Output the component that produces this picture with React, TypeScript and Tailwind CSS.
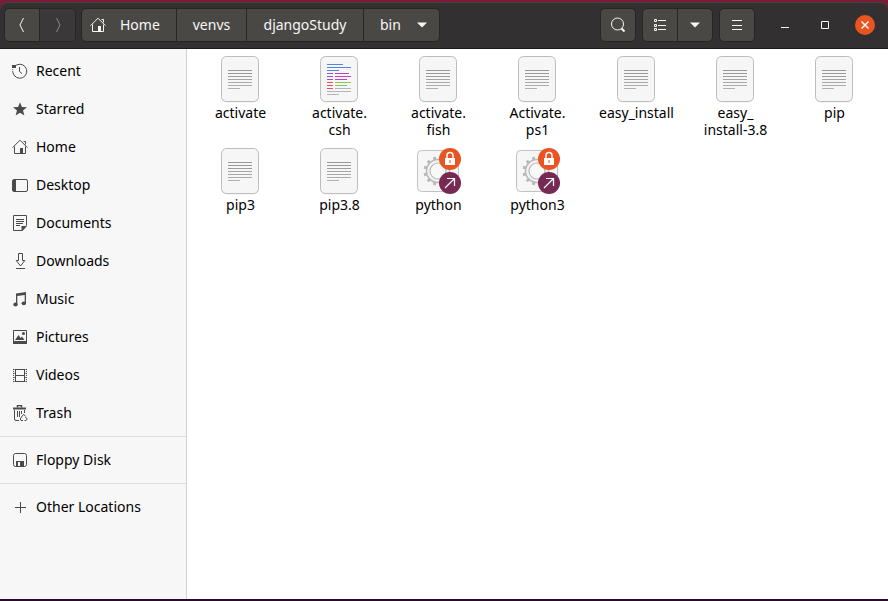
import type { ReactNode } from "react";

type IconProps = { children: ReactNode; className?: string };

function Icon({ children, className = "" }: IconProps) {
  return (
    <svg
      width="16"
      height="16"
      viewBox="0 0 16 16"
      fill="none"
      stroke="currentColor"
      aria-hidden="true"
      className={`shrink-0 ${className}`}
    >
      {children}
    </svg>
  );
}

const HomeGlyph = () => (
  <>
    <path d="M.6 8.6 8 1.2l7.4 7.4M11.5 2.5h2v3" />
    <path d="M2.5 7.5v7h6M13.5 7.5v7h-3" />
    <path d="M8 9h3v6H8z" fill="currentColor" stroke="none" />
  </>
);

const places: { name: string; glyph: ReactNode }[] = [
  {
    name: "Recent",
    glyph: (
      <>
        <path d="M2.2 4A7 7 0 1 1 .9 9.5" />
        <path d="M.9 9.5A7 7 0 0 1 .7 6" strokeDasharray="1.5 1" />
        <path d="M0 2h4v3H0z" fill="currentColor" stroke="none" />
        <path d="M7.5 4v4.5l2.5 2" />
      </>
    ),
  },
  {
    name: "Starred",
    glyph: (
      <path
        d="m8 1.2 1.9 4.8 5.100.2-4 3.300 1.400 5L8 11.700l-4.400 2.800 1.400-5L1 6.200 6.100 6z"
        fill="currentColor"
        stroke="none"
      />
    ),
  },
  { name: "Home", glyph: <HomeGlyph /> },
  {
    name: "Desktop",
    glyph: (
      <>
        <rect x=".5" y="2.500" width="15" height="12" rx="1.500" />
        <path d="M1 3h3v11H1z" fill="currentColor" stroke="none" />
      </>
    ),
  },
  {
    name: "Documents",
    glyph: (
      <>
        <path d="M1.500.5h13v10l-4 5h-9z" />
        <path d="M4 4.500h8M4 6.500h8M4 8.500h7M4 10.500h4" />
        <path d="M9.500 11H15l-5.500 5z" fill="currentColor" stroke="none" />
      </>
    ),
  },
  {
    name: "Downloads",
    glyph: (
      <>
        <path d="M6.500.5h4v7h2.300L8.500 13 4.200 7.500h2.300z" />
        <path d="M4 15.500h9" />
      </>
    ),
  },
  {
    name: "Music",
    glyph: (
      <g fill="currentColor" stroke="none">
        <path d="M4 2.500 14 1v11.500h-1.300V4L5.300 5v8.500H4z" />
        <ellipse cx="3.500" cy="13.500" rx="2.200" ry="1.900" />
        <ellipse cx="11.800" cy="12.300" rx="2.200" ry="1.900" />
      </g>
    ),
  },
  {
    name: "Pictures",
    glyph: (
      <>
        <path d="M1.500 1.500h13v13h-13z" />
        <path d="M1 12h14v3H1zM3 11l3.500-5 2.200 3 1.300-1.500L12.500 11z" fill="currentColor" stroke="none" />
        <circle cx="11.500" cy="4.500" r="1.500" fill="currentColor" stroke="none" />
      </>
    ),
  },
  {
    name: "Videos",
    glyph: (
      <>
        <path d="M3.500 2v13M12.500 2v13M3 2.500h10M3 8.500h10M3 14.500h10" />
        <path d="M1.500 2v13M14.500 2v13" strokeDasharray="1 1" />
        <path d="M1 2.500h2M1 14.500h2M13 2.500h2M13 14.500h2M1 6.500h2M1 10.500h2M13 6.500h2M13 10.500h2" opacity=".6" />
      </>
    ),
  },
  {
    name: "Trash",
    glyph: (
      <>
        <path d="M1 3.500h13" strokeWidth="2" />
        <path d="M5.500 2.500v-2h4v2" strokeWidth="1.500" />
        <path d="M2.500 5v9q0 1.500 1.500 1.500h3M12.500 5v3M5.500 6v6M7.500 6v6M9.500 6v3" />
        <path d="m9.500 12 2.200-2.700 2 2.200M13.500 12l1.700 2-1.200 1.500h-1.500M11 15.500H9L8.300 14l1.200-2" />
      </>
    ),
  },
];

const devices: { name: string; glyph: ReactNode }[] = [
  {
    name: "Floppy Disk",
    glyph: (
      <>
        <rect x="1.500" y="1.500" width="13" height="13" rx="2" />
        <path d="M4 9h8v5H8v-4H6v4H4z" fill="currentColor" stroke="none" />
      </>
    ),
  },
];

const others: { name: string; glyph: ReactNode }[] = [
  { name: "Other Locations", glyph: <path d="M3 8.500h11M8.500 3v11" /> },
];

function PlaceList({ items }: { items: { name: string; glyph: ReactNode }[] }) {
  return (
    <ul>
      {items.map((item) => (
        <li key={item.name}>
          <a href="#" className="flex h-[38px] items-center gap-2 pl-3 text-black">
            <Icon className="text-[#4a4a4a]">{item.glyph}</Icon>
            {item.name}
          </a>
        </li>
      ))}
    </ul>
  );
}

type Kind = "text" | "script" | "program";

const GRAY = "#b5b5b5";
const BLUE = "#5584e8";
const VIOLET = "#8a55d0";
const PINK = "#c33fc0";
const RED = "#e8505c";
const GREEN = "#86c65a";

const scriptLines: [number, number, number, string][] = [
  [11, 9, 16, BLUE],
  [11, 12, 24, BLUE],
  [11, 15, 12, BLUE],
  [11, 18, 6, VIOLET],
  [19, 18, 14, PINK],
  [11, 21, 6, VIOLET],
  [19, 21, 16, PINK],
  [11, 24, 6, VIOLET],
  [19, 24, 12, PINK],
  [11, 27, 6, RED],
  [19, 27, 16, GREEN],
  [11, 30, 6, RED],
  [19, 30, 12, GREEN],
  [11, 33, 6, RED],
  [19, 33, 16, GRAY],
  [11, 36, 24, GRAY],
  [11, 39, 12, GRAY],
];

const textLines: [number, number, number, string][] = [
  [11, 15, 24, "#989898"],
  [11, 18, 24, "#989898"],
  [11, 21, 24, "#9c9c9c"],
  [11, 24, 24, "#a4a4a4"],
  [11, 27, 24, "#a8a8a8"],
  [11, 30, 24, "#acacac"],
  [11, 33, 12, "#b0b0b0"],
];

const teeth = [0, 30, 60, 90, 120, 150, 180, 210, 240, 270, 300, 330];

function FileIcon({ kind }: { kind: Kind }) {
  if (kind === "program") {
    return (
      <svg width="47" height="48" viewBox="0 0 47 48" fill="none" aria-hidden="true">
        <rect x="2.500" y="3.500" width="41" height="41" rx="4" fill="#f6f6f6" stroke="#c2c2c2" />
        <g stroke="#b9b9b9">
          {teeth.map((angle) => (
            <path key={angle} d="M23 9.500v3.500" strokeWidth="3" transform={`rotate(${angle + 15} 23 24)`} />
          ))}
          <circle cx="23" cy="24" r="11.500" strokeWidth="1.500" fill="#f3f3f3" />
          <circle cx="23" cy="24" r="8" strokeWidth="1.200" fill="#f8f8f8" />
        </g>
        <circle cx="35" cy="12" r="11" fill="#e95420" />
        <path d="M30 11h10v7H30z" fill="#fff" />
        <path d="M32 11V8.500a3 3 0 0 1 6 0V11" stroke="#fff" strokeWidth="1.500" />
        <path d="M34.500 13h1v3h-1z" fill="#e95420" />
        <circle cx="35" cy="36" r="11" fill="#772953" />
        <path d="m30 41 9.500-9.500M32 31.500h7.500V39" stroke="#fff" strokeWidth="1.200" />
      </svg>
    );
  }
  const lines = kind === "script" ? scriptLines : textLines;
  return (
    <svg width="47" height="48" viewBox="0 0 47 48" fill="none" aria-hidden="true">
      <rect x="4.500" y="2.500" width="37" height="45" rx="5" fill="#ececec" />
      <rect x="4.500" y="1.500" width="37" height="45" rx="5" fill="#f6f6f6" stroke="#bdbdbd" />
      {lines.map(([x, y, width, fill]) => (
        <rect key={`${x}-${y}`} x={x} y={y} width={width} height="1" fill={fill} />
      ))}
    </svg>
  );
}

const files: { label: string[]; kind: Kind }[] = [
  { label: ["activate"], kind: "text" },
  { label: ["activate.", "csh"], kind: "script" },
  { label: ["activate.", "fish"], kind: "text" },
  { label: ["Activate.", "ps1"], kind: "text" },
  { label: ["easy_install"], kind: "text" },
  { label: ["easy_", "install-3.8"], kind: "text" },
  { label: ["pip"], kind: "text" },
  { label: ["pip3"], kind: "text" },
  { label: ["pip3.8"], kind: "text" },
  { label: ["python"], kind: "program" },
  { label: ["python3"], kind: "program" },
];

const group = "flex h-[34px] rounded-[5px] border border-[#272525] bg-[#4a4845] overflow-hidden";
const divider = "border-l border-[#272525]";
const center = "flex items-center justify-center";

const DownArrow = () => (
  <svg width="10" height="6" viewBox="0 0 10 6" fill="currentColor" aria-hidden="true">
    <path d="M0 .5h10L5 5.500z" />
  </svg>
);

export default function App() {
  return (
    <div className="flex min-h-screen flex-col border-y-2 border-t-[#7d1a35] border-b-[#2c0a2b] bg-[#7d1a35] font-['Noto_Sans','Open_Sans',sans-serif] text-sm">
      <header className="flex h-[47px] items-center rounded-t-lg border-t border-b border-t-[#454343] border-b-[#1c1a1a] bg-[#323030] pb-px pl-1 pr-[13px] text-[#f7f7f7]">
        <div className={group}>
          <button aria-label="Back" className={`${center} w-[34px]`}>
            <Icon><path d="M9.500 1 6 8l3.500 7" /></Icon>
          </button>
          <button aria-label="Forward" disabled className={`${center} ${divider} w-9 bg-[#3a3838] text-[#8a8886]`}>
            <Icon><path d="M6.500 1 10 8l-3.500 7" /></Icon>
          </button>
        </div>

        <nav aria-label="Path" className={`${group} ml-[5px]`}>
          <button className="flex w-[94px] items-center gap-3.5 pl-2">
            <Icon><HomeGlyph /></Icon>
            Home
          </button>
          <button className={`${center} ${divider} w-[70px]`}>venvs</button>
          <button className={`${center} ${divider} w-[117px]`}>djangoStudy</button>
          <button className={`flex items-center ${divider} w-[76px] gap-4 pl-4`}>
            bin
            <DownArrow />
          </button>
        </nav>

        <div className="ml-auto flex items-center gap-1.5">
          <button aria-label="Search" className={`${group} ${center} w-9`}>
            <Icon>
              <circle cx="7.500" cy="7" r="6" />
              <path d="m11.500 11.500 3 3" strokeWidth="2" />
            </Icon>
          </button>
          <div className={group}>
            <button aria-label="List view" className={`${center} w-[34px]`}>
              <Icon>
                <path d="M6 3.500h8M6 8.500h8M6 12.500h8" />
                <path d="M2.500 2.500h2v2h-2zM2.500 7.500h2v2h-2zM2.500 11.500h2v2h-2z" />
              </Icon>
            </button>
            <button aria-label="View options" className={`${center} ${divider} w-[35px]`}>
              <DownArrow />
            </button>
          </div>
          <button aria-label="Menu" className={`${group} ${center} w-9`}>
            <Icon><path d="M3 3.500h10M3 8.500h10M3 12.500h10" /></Icon>
          </button>
        </div>

        <div className="ml-5 flex items-center gap-5">
          <button aria-label="Minimize" className={`${center} size-5`}>
            <Icon><path d="M4 10.500h8" /></Icon>
          </button>
          <button aria-label="Maximize" className={`${center} size-5`}>
            <Icon><path d="M4.500 4.500h7v7h-7z" /></Icon>
          </button>
          <button aria-label="Close" className={`${center} size-5 rounded-full bg-[#e95420]`}>
            <Icon><path d="m4.500 4.500 7 7M11.500 4.500l-7 7" strokeWidth="1.500" /></Icon>
          </button>
        </div>
      </header>

      <div className="flex flex-1">
        <nav aria-label="Places" className="w-[187px] shrink-0 border-r border-[#d4d4d4] bg-[#f7f7f7] pt-[3px]">
          <PlaceList items={places} />
          <hr className="my-1 border-[#dcdcdc]" />
          <PlaceList items={devices} />
          <hr className="my-1 border-[#dcdcdc]" />
          <PlaceList items={others} />
        </nav>

        <main className="flex-1 bg-white px-1 pt-1.5">
          <ul className="grid grid-cols-7 gap-y-[9px]">
            {files.map((file) => (
              <li key={file.label.join("")}>
                <button className="flex w-full flex-col items-center gap-px text-center leading-[17px] text-black">
                  <FileIcon kind={file.kind} />
                  <span>
                    {file.label.map((part) => (
                      <span key={part} className="block">{part}</span>
                    ))}
                  </span>
                </button>
              </li>
            ))}
          </ul>
        </main>
      </div>
    </div>
  );
}
